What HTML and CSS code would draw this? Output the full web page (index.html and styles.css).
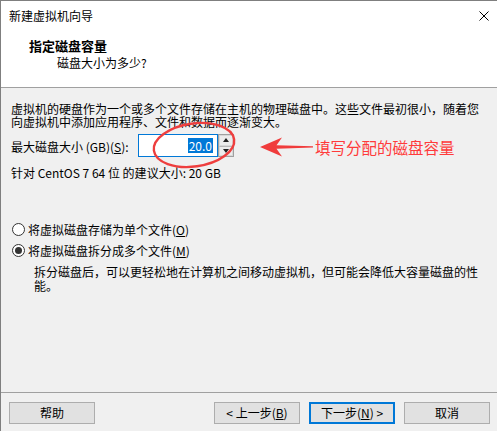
FILE: index.html
```html
<!DOCTYPE html>
<html lang="zh-CN">
<head>
<meta charset="utf-8">
<title>新建虚拟机向导</title>
<link rel="stylesheet" href="styles.css">
</head>
<body>
<div class="window">
  <div class="titlebar">
    <span class="title">新建虚拟机向导</span>
    <svg class="close" width="10" height="10" viewBox="0 0 10 10"><path d="M0.5 0.5 L9.5 9.5 M9.5 0.5 L0.5 9.5" stroke="#000" stroke-width="1" fill="none"/></svg>
  </div>
  <div class="header">
    <div class="h-title">指定磁盘容量</div>
    <div class="h-sub">磁盘大小为多少?</div>
  </div>
  <div class="content">
    <p class="intro">虚拟机的硬盘作为一个或多个文件存储在主机的物理磁盘中。这些文件最初很小，随着您<br>向虚拟机中添加应用程序、文件和数据而逐渐变大。</p>
    <div class="size-row">
      <span class="size-label">最大磁盘大小 (GB)(<u>S</u>):</span>
      <div class="spin-input"><span class="sel">20.0</span></div>
      <div class="spinner">
        <span class="spin-btn"><span class="tri-up"></span></span>
        <span class="spin-btn"><span class="tri-down"></span></span>
      </div>
    </div>
    <p class="recommend">针对 CentOS 7 64 位 的建议大小: 20 GB</p>
    <div class="radios">
      <div class="radio-row"><span class="radio"></span><span>将虚拟磁盘存储为单个文件(<u>O</u>)</span></div>
      <div class="radio-row"><span class="radio checked"></span><span>将虚拟磁盘拆分成多个文件(<u>M</u>)</span></div>
      <p class="desc">拆分磁盘后，可以更轻松地在计算机之间移动虚拟机，但可能会降低大容量磁盘的性<br>能。</p>
    </div>
  </div>
  <div class="footer">
    <button class="btn">帮助</button>
    <span class="spacer"></span>
    <button class="btn">&lt; 上一步(<u>B</u>)</button>
    <button class="btn default">下一步(<u>N</u>) &gt;</button>
    <button class="btn">取消</button>
  </div>
</div>
<svg class="annot" width="497" height="431" viewBox="0 0 497 431">
  <ellipse cx="194" cy="145" rx="40.5" ry="21.5" transform="rotate(-8 194 145)" fill="none" stroke="#ee3e3e" stroke-width="2.4"/>
  <path d="M260 147 L282 137.5 L276.5 145.2 L313 146.2 L313 147.6 L276.5 148.8 L282 156.5 Z" fill="#f03c3c"/>
</svg>
<span class="annot-text">填写分配的磁盘容量</span>
</body>
</html>
```
FILE: styles.css
```css
html, body {
  margin: 0;
  padding: 0;
}
body {
  position: relative;
  width: 497px;
  height: 431px;
  overflow: hidden;
  font-family: "Noto Sans CJK SC", "Noto Sans", sans-serif;
  font-size: 12px;
  color: #000;
  background: #f0f0f0;
}
.window {
  box-sizing: border-box;
  width: 497px;
  height: 431px;
  border-left: 1px solid #7f7f7f;
  border-top: 1px solid #7f7f7f;
  display: flex;
  flex-direction: column;
  background: #f0f0f0;
}
.titlebar {
  height: 29px;
  flex: none;
  background: #fff;
  display: flex;
  align-items: center;
  justify-content: space-between;
  padding: 0 8px 0 8px;
}
.title {
  line-height: 16px;
}
.close {
  display: block;
}
.header {
  height: 57px;
  flex: none;
  box-sizing: border-box;
  background: #fff;
  border-bottom: 1px solid #a0a0a0;
  padding: 8px 0 0 28px;
  height: 58px;
}
.h-title {
  font-weight: bold;
  font-size: 13px;
  line-height: 16px;
}
.h-sub {
  margin: 1px 0 0 28px;
  line-height: 16px;
}
.content {
  flex: 1;
  padding: 0 0 0 10px;
}
.intro {
  margin: 14px 0 0 0;
  line-height: 13px;
  white-space: nowrap;
}
.size-row {
  margin-top: 6px;
  height: 23px;
  display: flex;
  align-items: center;
}
.size-label {
  width: 127px;
  line-height: 13px;
  padding-top: 2px;
  white-space: nowrap;
}
.spin-input {
  box-sizing: border-box;
  width: 80px;
  height: 23px;
  border: 1px solid #0078d7;
  background: #fff;
  display: flex;
  align-items: center;
  justify-content: flex-end;
  padding-right: 4px;
}
.sel {
  background: #0078d7;
  color: #fff;
  line-height: 15px;
  padding: 0 1px;
}
.spinner {
  box-sizing: border-box;
  width: 16px;
  height: 23px;
  border: 1px solid #a0a0a0;
  background: #e6e6e6;
  display: flex;
  flex-direction: column;
}
.spin-btn {
  flex: 1;
  display: flex;
  align-items: center;
  justify-content: center;
  border: 1px solid #d8d8d8;
  background: #ececec;
}
.spin-btn + .spin-btn {
  border-top-color: #b8b8b8;
}
.tri-up {
  width: 0;
  height: 0;
  border-left: 3.5px solid transparent;
  border-right: 3.5px solid transparent;
  border-bottom: 4px solid #222;
}
.tri-down {
  width: 0;
  height: 0;
  border-left: 3.5px solid transparent;
  border-right: 3.5px solid transparent;
  border-top: 4px solid #222;
}
.recommend {
  margin: 9px 0 0 0;
  line-height: 13px;
}
.radios {
  margin-top: 40px;
}
.radio-row {
  height: 21px;
  display: flex;
  align-items: center;
  gap: 3px;
  line-height: 13px;
}
.radio {
  box-sizing: border-box;
  width: 13px;
  height: 13px;
  margin-left: 1px;
  border: 1px solid #333;
  border-radius: 50%;
  background: #fff;
  display: flex;
  align-items: center;
  justify-content: center;
}
.radio.checked::after {
  content: "";
  width: 7px;
  height: 7px;
  border-radius: 50%;
  background: #333;
}
.desc {
  margin: 4px 0 0 23px;
  line-height: 14px;
  white-space: nowrap;
}
.footer {
  flex: none;
  height: 39px;
  box-sizing: border-box;
  border-top: 1px solid #a0a0a0;
  padding: 9px 7px 0 8px;
  display: flex;
  align-items: flex-start;
  gap: 9px;
}
.spacer {
  flex: 1;
}
.btn {
  box-sizing: border-box;
  width: 86px;
  height: 22px;
  margin: 0;
  padding: 0;
  border: 1px solid #adadad;
  background: #e1e1e1;
  font: inherit;
  font-size: 12px;
  line-height: 14px;
  color: #000;
}
.btn.default {
  border: 2px solid #0078d7;
}
.annot {
  position: absolute;
  left: 0;
  top: 0;
  pointer-events: none;
}
.annot-text {
  position: absolute;
  left: 315px;
  top: 137px;
  font-size: 15.5px;
  line-height: 20px;
  color: #ff3b3b;
  white-space: nowrap;
}
```
